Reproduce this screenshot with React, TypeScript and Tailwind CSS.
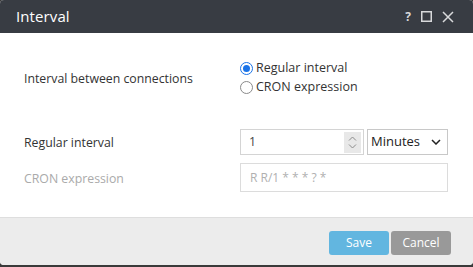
import React from "react";

export default function App() {
  const font = { fontFamily: '"Open Sans", "Noto Sans", sans-serif' };
  return (
    <div className="w-[473px] h-[267px] bg-[#3a3a3a] overflow-hidden" style={font}>
      <div className="w-[473px] h-[265px] flex flex-col rounded-[4px] overflow-hidden bg-white">
        {/* Header */}
        <div className="h-[33px] bg-[#383c43] flex items-center pl-[16px] pr-[19px] shrink-0">
          <div className="text-white text-[15px] leading-none flex-1 tracking-[0.1px]">Interval</div>
          <div className="flex items-center gap-[10px] text-[#d8d9db]">
            <span className="text-[12px] font-bold leading-none">?</span>
            <svg width="11" height="11" viewBox="0 0 11 11" fill="none">
              <rect x="0.75" y="0.75" width="9.5" height="9.5" stroke="#d8d9db" strokeWidth="1.5" />
            </svg>
            <svg width="12" height="12" viewBox="0 0 12 12" fill="none">
              <path d="M1 1L11 11M11 1L1 11" stroke="#d8d9db" strokeWidth="1.5" />
            </svg>
          </div>
        </div>
        {/* Body */}
        <div className="flex-1 bg-white pl-[24px] pr-[25px] pt-[27px] text-[12.3px] text-[#333]">
          <div className="flex items-center h-[36px]">
            <div className="w-[216px] pt-[2px]">Interval between connections</div>
            <div className="flex flex-col gap-[2px]">
              <label className="flex items-center gap-[3px] h-[17px]">
                <span className="w-[13px] h-[13px] rounded-full border-[1.5px] border-[#1a73e8] flex items-center justify-center">
                  <span className="w-[7px] h-[7px] rounded-full bg-[#1a73e8]" />
                </span>
                <span className="text-[12.5px]">Regular interval</span>
              </label>
              <label className="flex items-center gap-[3px] h-[17px]">
                <span className="w-[13px] h-[13px] rounded-full border-[1.5px] border-[#8a8a8a]" />
                <span className="text-[12.5px]">CRON expression</span>
              </label>
            </div>
          </div>
          <div className="flex items-center mt-[33px] h-[26px]">
            <div className="w-[216px] pt-[2px]">Regular interval</div>
            <div className="flex gap-[3px]">
              <div className="w-[124px] h-[26px] border border-[#d4d4d4] flex items-center pl-[8px] pr-[2px]">
                <span className="flex-1 text-[#444]">1</span>
                <div className="w-[17px] h-[21px] bg-[#e8e8e8] flex flex-col items-center justify-center gap-[3px]">
                  <svg width="9" height="5" viewBox="0 0 9 5" fill="none">
                    <path d="M1 4.5L4.5 1L8 4.5" stroke="#8a8a8a" strokeWidth="1" />
                  </svg>
                  <svg width="9" height="5" viewBox="0 0 9 5" fill="none">
                    <path d="M1 0.5L4.5 4L8 0.5" stroke="#8a8a8a" strokeWidth="1" />
                  </svg>
                </div>
              </div>
              <div className="w-[81px] h-[26px] border border-[#c8c8c8] flex items-center pl-[3px] pr-[6px]">
                <span className="flex-1 text-[13px] text-[#222]">Minutes</span>
                <svg width="10" height="6" viewBox="0 0 10 6" fill="none">
                  <path d="M1 1L5 5L9 1" stroke="#222" strokeWidth="1.5" />
                </svg>
              </div>
            </div>
          </div>
          <div className="flex items-center mt-[8px] h-[29px]">
            <div className="w-[216px] text-[#aaa] pt-[3px]">CRON expression</div>
            <div className="w-[208px] h-[29px] border border-[#dcdcdc] flex items-center pl-[9px] text-[#b0b0b0] text-[12px]">
              R R/1 * * * ? *
            </div>
          </div>
        </div>
        {/* Footer */}
        <div className="h-[48px] bg-[#ececec] border-t border-[#dedede] flex items-center justify-end pr-[22px] gap-[2px] shrink-0">
          <button className="w-[60px] h-[24px] rounded-[3px] bg-[#62b6e0] text-white text-[12px] leading-none mt-[2px]">Save</button>
          <button className="w-[60px] h-[24px] rounded-[3px] bg-[#999] text-white text-[12px] leading-none mt-[2px]">Cancel</button>
        </div>
      </div>
    </div>
  );
}
